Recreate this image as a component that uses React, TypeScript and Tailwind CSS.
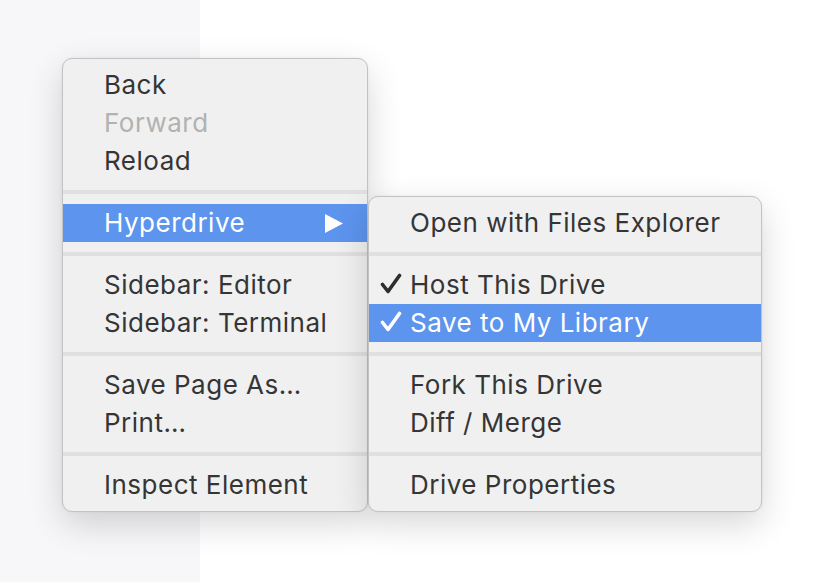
import { ReactNode } from 'react'

type Entry =
  | { kind: 'item'; label: string; disabled?: boolean; active?: boolean; checked?: boolean; submenu?: boolean }
  | { kind: 'sep' }

const mainMenu: Entry[] = [
  { kind: 'item', label: 'Back' },
  { kind: 'item', label: 'Forward', disabled: true },
  { kind: 'item', label: 'Reload' },
  { kind: 'sep' },
  { kind: 'item', label: 'Hyperdrive', active: true, submenu: true },
  { kind: 'sep' },
  { kind: 'item', label: 'Sidebar: Editor' },
  { kind: 'item', label: 'Sidebar: Terminal' },
  { kind: 'sep' },
  { kind: 'item', label: 'Save Page As…' },
  { kind: 'item', label: 'Print…' },
  { kind: 'sep' },
  { kind: 'item', label: 'Inspect Element' },
]

const driveMenu: Entry[] = [
  { kind: 'item', label: 'Open with Files Explorer' },
  { kind: 'sep' },
  { kind: 'item', label: 'Host This Drive', checked: true },
  { kind: 'item', label: 'Save to My Library', checked: true, active: true },
  { kind: 'sep' },
  { kind: 'item', label: 'Fork This Drive' },
  { kind: 'item', label: 'Diff / Merge' },
  { kind: 'sep' },
  { kind: 'item', label: 'Drive Properties' },
]

function Check({ white }: { white?: boolean }) {
  return (
    <svg width="22" height="24" viewBox="0 0 22 24" className="mt-[-3px]">
      <polyline
        points="2.5,12.5 8,19.5 19.5,3.5"
        fill="none"
        stroke={white ? '#ffffff' : '#2e2e2e'}
        strokeWidth="3.6"
        strokeLinecap="round"
        strokeLinejoin="round"
      />
    </svg>
  )
}

function Arrow() {
  return (
    <svg width="18" height="19" viewBox="0 0 18 19" className="ml-auto">
      <polygon points="0,0 18,9.5 0,19" fill="#ffffff" />
    </svg>
  )
}

function Menu({ entries, className }: { entries: Entry[]; className: string }) {
  return (
    <div
      className={
        'absolute rounded-[10px] border border-[#c3c3c3] bg-[#f0f0f0] py-[7px] shadow-[0_12px_34px_rgba(0,0,0,0.16),0_0_3px_rgba(0,0,0,0.06)] ' +
        className
      }
    >
      {entries.map((e, i): ReactNode => {
        if (e.kind === 'sep') {
          return (
            <div key={i} className="flex h-[24px] items-center">
              <div className="h-[4px] w-full bg-[#e0e0e0]" />
            </div>
          )
        }
        const color = e.active ? 'bg-[#5d94ee] text-white' : e.disabled ? 'text-[#b2b2b2]' : 'text-[#353535]'
        return (
          <div key={i} className={'flex h-[38px] items-center pl-[11px] pr-[24px] whitespace-nowrap ' + color}>
            <div className="flex w-[30px] shrink-0 items-center">{e.checked && <Check white={e.active} />}</div>
            <span className="leading-none tracking-[0.5px]">{e.label}</span>
            {e.submenu && <Arrow />}
          </div>
        )
      })}
    </div>
  )
}

export default function App() {
  return (
    <div
      className="relative h-[582px] w-[826px] overflow-hidden bg-white text-[26px]"
      style={{ fontFamily: "Inter, 'Noto Sans', 'Liberation Sans', sans-serif" }}
    >
      <div className="h-full w-[200px] bg-[#f7f7f9]" />
      <Menu entries={mainMenu} className="left-[62px] top-[58px] w-[306px]" />
      <Menu entries={driveMenu} className="left-[368px] top-[196px] w-[394px]" />
    </div>
  )
}
